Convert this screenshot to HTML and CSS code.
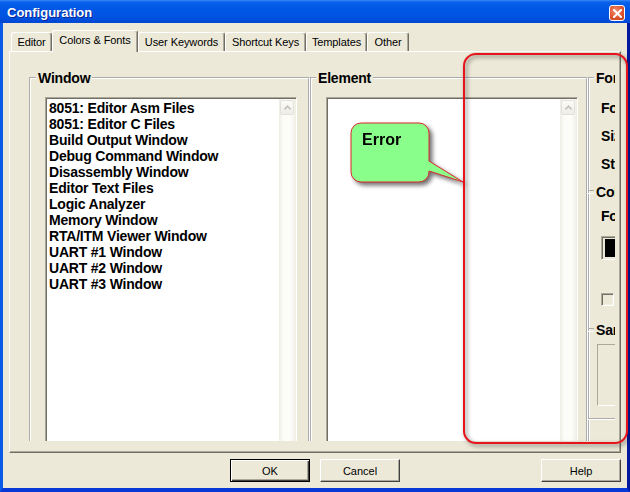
FILE: index.html
```html
<!DOCTYPE html>
<html lang="en">
<head>
<meta charset="utf-8">
<title>Configuration</title>
<link rel="stylesheet" href="styles.css">
</head>
<body>
<div class="window">
  <div class="titlebar">
    <span class="title">Configuration</span>
    <span class="close" aria-label="Close">
      <svg width="9" height="9" viewBox="0 0 9 9"><path d="M1 1L8 8M8 1L1 8" stroke="#fff" stroke-width="2" stroke-linecap="square"/></svg>
    </span>
  </div>
  <div class="frame">
    <div class="tabs">
      <div class="tab tab-editor">Editor</div>
      <div class="tab tab-colors active">Colors &amp; Fonts</div>
      <div class="tab tab-keywords">User Keywords</div>
      <div class="tab tab-shortcuts">Shortcut Keys</div>
      <div class="tab tab-templates">Templates</div>
      <div class="tab tab-other">Other</div>
    </div>
    <div class="panel">
      <div class="clip">
        <fieldset class="group g-window">
          <legend>Window</legend>
          <div class="listbox">
            <ul class="items">
              <li>8051: Editor Asm Files</li>
              <li>8051: Editor C Files</li>
              <li>Build Output Window</li>
              <li>Debug Command Window</li>
              <li>Disassembly Window</li>
              <li>Editor Text Files</li>
              <li>Logic Analyzer</li>
              <li>Memory Window</li>
              <li>RTA/ITM Viewer Window</li>
              <li>UART #1 Window</li>
              <li>UART #2 Window</li>
              <li>UART #3 Window</li>
            </ul>
            <div class="vscroll">
              <div class="vbtn"><svg width="7" height="5" viewBox="0 0 7 5"><polyline points="0.5,4.5 3.5,1.2 6.5,4.5" fill="none" stroke="#C4C2B8" stroke-width="1.6"/></svg></div>
            </div>
          </div>
        </fieldset>
        <fieldset class="group g-element">
          <legend>Element</legend>
          <div class="listbox">
            <ul class="items"></ul>
            <div class="vscroll">
              <div class="vbtn"><svg width="7" height="5" viewBox="0 0 7 5"><polyline points="0.5,4.5 3.5,1.2 6.5,4.5" fill="none" stroke="#C4C2B8" stroke-width="1.6"/></svg></div>
            </div>
          </div>
        </fieldset>
        <fieldset class="group g-font">
          <legend>Font</legend>
          <span class="lbl lbl-font">Font:</span>
          <span class="lbl lbl-row">Size:</span>
          <span class="lbl lbl-row">Style:</span>
          <div class="sect sect-colors"><span>Colors</span></div>
          <span class="lbl lbl-fg">Foreground:</span>
          <div class="swatch"><span class="swatch-fill"></span></div>
          <span class="check"></span>
          <div class="sect sect-sample"><span>Sample</span></div>
          <div class="sample"></div>
          <div class="rule"></div>
        </fieldset>
      </div>
    </div>
    <div class="buttons">
      <button class="btn btn-default" type="button">OK</button>
      <button class="btn" type="button">Cancel</button>
      <button class="btn btn-help" type="button">Help</button>
    </div>
  </div>

  <svg class="callout" width="125" height="75" viewBox="0 0 125 75">
    <path d="M16 6H74A10 10 0 0 1 84 16V44L118 65L84 54V55A10 10 0 0 1 74 65H16A10 10 0 0 1 6 55V16A10 10 0 0 1 16 6Z" fill="#8AFE8A" stroke="#E0262C" stroke-width="1"/>
    <text x="17" y="28" class="callout-text">Error</text>
  </svg>

  <svg class="highlight" width="180" height="406" viewBox="0 0 180 406">
    <rect x="8" y="8" width="163" height="389" rx="12" ry="12" fill="none" stroke="#E8141C" stroke-width="2"/>
  </svg>
</div>
</body>
</html>
```

FILE: styles.css
```css
* { box-sizing: border-box; }

html, body {
  margin: 0;
  padding: 0;
}

body {
  width: 630px;
  height: 492px;
  overflow: hidden;
  background: #ECE9D8;
  font-family: "Liberation Sans", Arial, sans-serif;
  color: #000;
}

/* ---------- window chrome ---------- */
.window {
  position: relative;
  width: 630px;
  height: 492px;
  display: flex;
  flex-direction: column;
  background: #ECE9D8;
}

.titlebar {
  flex: none;
  height: 23px;
  display: flex;
  align-items: flex-start;
  background: linear-gradient(#3A8AF6 0, #0B61EA 2px, #0058E6 35%, #0053E1 75%, #0046D2 100%);
}

.title {
  padding: 3px 0 0 7px;
  font-size: 13px;
  line-height: 20px;
  font-weight: bold;
  color: #fff;
  text-shadow: 1px 1px 0 #0A2390;
}

.close {
  margin: 5px 5px 0 auto;
  width: 16px;
  height: 16px;
  border: 1px solid #fff;
  border-radius: 3px;
  background: radial-gradient(circle at 40% 35%, #F1906F 0, #DF5530 55%, #C23C14 100%);
  display: flex;
  align-items: center;
  justify-content: center;
}

.frame {
  flex: 1;
  display: flex;
  flex-direction: column;
  border-left: 3px solid #0A5AE6;
  border-right: 3px solid #00189E;
  border-bottom: 4px solid #0838D6;
}

/* ---------- tab strip ---------- */
.tabs {
  display: flex;
  align-items: flex-end;
  height: 22px;
  margin-top: 7px;
  padding-left: 8px;
}

.tab {
  flex: none;
  height: 19px;
  margin-bottom: 1px;
  padding: 2px 0;
  border: 1px solid;
  border-bottom: 0;
  border-color: #fff #716F64 transparent #fff;
  border-radius: 3px 3px 0 0;
  box-shadow: inset -1px 0 #ACA899;
  background: #ECE9D8;
  font-size: 11px;
  line-height: 14px;
  letter-spacing: -0.1px;
  text-align: center;
  white-space: nowrap;
}

.tab.active {
  position: relative;
  z-index: 1;
  height: 22px;
  margin-bottom: 0;
  padding-bottom: 5px;
}

.tab-editor { width: 41px; }
.tab-colors { width: 86px; }
.tab-keywords { width: 87px; }
.tab-shortcuts { width: 81px; }
.tab-templates { width: 61px; }
.tab-other { width: 42px; }

/* ---------- tab page ---------- */
.panel {
  margin: -1px 0 0 6px;
  width: 612px;
  height: 402px;
  border: 1px solid;
  border-color: #fff #716F64 #716F64 #fff;
  box-shadow: inset -1px -1px #ACA899;
}

/* the page's controls are wider than the page, so they are cut at its edge */
.clip {
  width: 605px;
  height: 389px;
  overflow: hidden;
  display: flex;
  align-items: flex-start;
  padding: 19px 0 0 19px;
}

.group {
  flex: none;
  min-width: 0;
  height: 400px;
  margin: 0;
  padding: 0;
  border: 2px groove #fff;
}

.group legend {
  margin-left: 5px;
  padding: 0 2px;
  font-size: 14px;
  line-height: 14px;
  font-weight: bold;
  letter-spacing: -0.2px;
  white-space: nowrap;
}

.g-window { width: 281px; }
.g-element { width: 278px; }
.g-element legend { margin-left: 4px; }

.g-font {
  width: 120px;
  border-right: 0;
  border-bottom: 0;
}
.g-font legend { margin-left: 4px; }

/* ---------- list boxes ---------- */
.listbox {
  display: flex;
  width: 252px;
  height: 360px;
  margin: 12px 0 0 14px;
  padding: 1px;
  background: #fff;
  border: 1px solid;
  border-color: #ACA899 #fff #fff #ACA899;
  box-shadow: inset 1px 1px #716F64, inset -1px -1px #F1EFE2;
}

.items {
  flex: 1;
  margin: 0;
  padding: 1px 0 0 2px;
  list-style: none;
  font-size: 14px;
  line-height: 16px;
  font-weight: bold;
  letter-spacing: -0.2px;
  white-space: nowrap;
}

.vscroll {
  flex: none;
  width: 16px;
  padding: 1px;
  background: linear-gradient(to right, #EEEDE5 0, #FCFCF9 25%, #FDFDFA 70%, #F1F0EA 100%);
}

.vbtn {
  height: 15px;
  border: 1px solid #E3E2DA;
  border-radius: 2px;
  background: linear-gradient(#FBFBF8, #EEEDE7);
  display: flex;
  align-items: center;
  justify-content: center;
}

/* ---------- font / colour settings column ---------- */
.lbl {
  display: block;
  margin-left: 11px;
  font-size: 14px;
  line-height: 14px;
  font-weight: bold;
  letter-spacing: -0.2px;
  white-space: nowrap;
}

.lbl-font { margin-top: 16px; }
.lbl-row { margin-top: 14px; }
.lbl-fg { margin-top: 10px; }

.sect {
  display: flex;
  align-items: center;
  margin-left: -2px;
  font-size: 14px;
  line-height: 14px;
  font-weight: bold;
  letter-spacing: -0.2px;
  white-space: nowrap;
}
.sect::before {
  content: "";
  flex: none;
  width: 6px;
  height: 2px;
  border-top: 1px solid #ABABAB;
  border-bottom: 1px solid #fff;
}
.sect span { padding-left: 2px; }
.sect-colors { margin-top: 14px; }
.sect-sample { margin-top: 17px; }

.swatch {
  display: block;
  width: 40px;
  height: 24px;
  margin: 13px 0 0 11px;
  padding: 2px 0 2px 3px;
  border: 1px solid;
  border-color: #ACA899 #fff #fff #ACA899;
  box-shadow: inset 1px 1px #716F64;
}
.swatch-fill {
  display: block;
  height: 18px;
  background: #000;
}

.check {
  display: block;
  width: 13px;
  height: 13px;
  margin: 33px 0 0 11px;
  border: 1px solid;
  border-color: #ACA899 #fff #fff #ACA899;
  box-shadow: inset 1px 1px #716F64, inset -1px -1px #F1EFE2;
  background: #ECE9D8;
}

.sample {
  width: 60px;
  height: 62px;
  margin: 7px 0 0 7px;
  border: 1px solid;
  border-color: #ACA899 #fff #fff #ACA899;
}

.rule {
  height: 2px;
  margin: 12px 0 0 -2px;
  border-top: 1px solid #ABABAB;
  border-bottom: 1px solid #fff;
}

/* ---------- dialog buttons ---------- */
.buttons {
  display: flex;
  gap: 10px;
  margin-top: 6px;
  padding: 0 6px 0 227px;
}

.btn {
  flex: none;
  width: 80px;
  height: 23px;
  margin: 0;
  padding: 0;
  font-family: "Liberation Sans", Arial, sans-serif;
  font-size: 11px;
  color: #000;
  background: #ECE9D8;
  border: 1px solid;
  border-color: #fff #404040 #404040 #fff;
  box-shadow: inset -1px -1px #ACA899;
  border-radius: 0;
}

.btn-default {
  border-color: #000;
  box-shadow: inset 1px 1px #fff, inset -1px -1px #404040, inset -2px -2px #ACA899;
}

.btn-help { margin-left: auto; }

/* ---------- annotations drawn over the dialog ---------- */
.callout {
  position: absolute;
  left: 345px;
  top: 117px;
  overflow: visible;
  filter: drop-shadow(3px 3px 2px rgba(0, 0, 0, 0.55));
}

.callout-text {
  font-family: "Liberation Sans", Arial, sans-serif;
  font-size: 16px;
  font-weight: bold;
  fill: #000;
}

.highlight {
  position: absolute;
  left: 456px;
  top: 46px;
  overflow: visible;
  filter: drop-shadow(2px 2px 2px rgba(0, 0, 0, 0.5));
}
```
